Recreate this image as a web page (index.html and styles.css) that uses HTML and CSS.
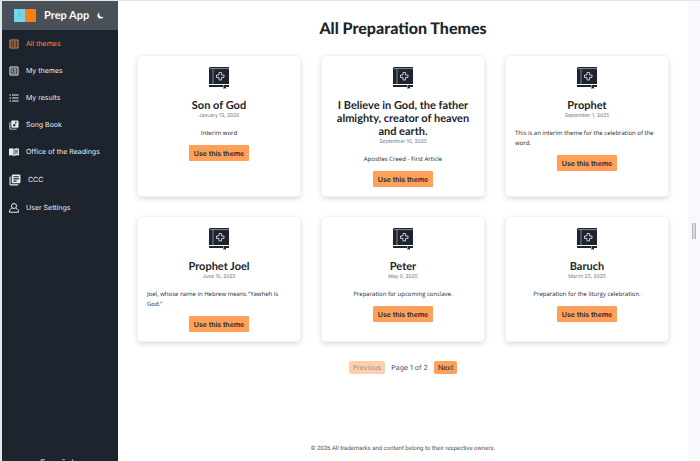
FILE: index.html
```html
<!DOCTYPE html>
<html lang="en">
<head>
    <meta charset="UTF-8">
    <meta name="viewport" content="width=device-width, initial-scale=1.0">
    <title>Prep App</title>
    <link rel="stylesheet" href="styles.css">
</head>
<body>
    <svg class="defs" width="0" height="0" aria-hidden="true">
        <symbol id="book" viewBox="0 0 20 22">
            <path fill="#1d2430" d="M1 0h19v17H0V1z"/>
            <path stroke="#aeb4bc" stroke-width=".7" fill="none" d="M1 1.600h19M4 1.600V17"/>
            <path fill="#1d2430" d="M0 18h14v2H0zM17 18h3v2h-3zM14.500 18H17v4l-1.250-1-1.250 1z"/>
            <path stroke="#d5d8dc" stroke-width=".9" fill="#1d2430" d="M10 5.500h2.500V8H15v2.500h-2.500V13H10v-2.500H7.500V8H10z"/>
        </symbol>
        <symbol id="list-box" viewBox="0 0 20 20">
            <path fill="none" stroke="currentColor" stroke-width="2" d="M2 2h16v16H2z"/>
            <path fill="currentColor" d="M5 5h2.500v2.500H5zM5 9h2.500v2.500H5zM5 13h2.500v2.500H5zM9 5h6v2H9zM9 9h6v2H9zM9 13h6v2H9z"/>
        </symbol>
    </svg>

    <div class="layout">
        <aside class="sidebar">
            <header class="brand">
                <svg class="logo" viewBox="0 0 22 13" aria-hidden="true">
                    <path fill="#71d5ee" d="M0 0h11v13H0z"/>
                    <path fill="#fd7e14" d="M11 0h11v13H11z"/>
                    <path stroke="#b3a477" stroke-width="1" d="M5.500 4v4M4 5h3"/>
                </svg>
                <span class="brand-name">Prep App</span>
                <button class="theme-toggle" type="button" aria-label="Dark mode">
                    <svg viewBox="0 0 16 16"><path fill="#fff" d="M6 1a6.500 6.500 0 0 0 9 9A7.200 7.200 0 1 1 6 1z"/></svg>
                </button>
            </header>
            <nav class="menu">
                <a class="active" href="#">
                    <svg><use href="#list-box"/></svg>
                    All themes
                </a>
                <a href="#">
                    <svg><use href="#list-box"/></svg>
                    My themes
                </a>
                <a href="#">
                    <svg viewBox="0 0 20 20"><path fill="none" stroke="currentColor" stroke-width="2" d="M1 4h3M6 4h13M1 10h3M6 10h13M1 16h3M6 16h13"/></svg>
                    My results
                </a>
                <a href="#">
                    <svg viewBox="1 1 22 22"><path fill="currentColor" d="M20 2H8a2 2 0 0 0-2 2v12c0 1.100.9 2 2 2h12a2 2 0 0 0 2-2V4a2 2 0 0 0-2-2zm-2 5h-3v5.500a2.500 2.500 0 1 1-1-2V5h4zM4 6H2v14c0 1.100.9 2 2 2h14v-2H4z"/></svg>
                    Song Book
                </a>
                <a href="#">
                    <svg viewBox="1 1 22 22"><path fill="currentColor" d="M1 5c3-2 8-2 11 .5C15 3 20 3 23 5v15c-3-1.500-8-1.500-11 1-3-2.500-8-2.500-11-1z"/><path stroke="#1d242d" stroke-width="1.500" fill="none" d="M12 6v13M14 9c2-1 4-1 7-.5M14 12c2-1 4-1 7-.5M14 15c2-1 4-1 7-.5"/></svg>
                    Office of the Readings
                </a>
                <a class="large" href="#">
                    <svg viewBox="1 1 22 22"><path fill="currentColor" d="M4 6H2v14c0 1.100.9 2 2 2h14v-2H4zM20 2H8a2 2 0 0 0-2 2v12c0 1.100.9 2 2 2h12a2 2 0 0 0 2-2V4a2 2 0 0 0-2-2zm-1 9H9V9h10zm-4 4H9v-2h6zm4-8H9V5h10z"/></svg>
                    CCC
                </a>
                <a href="#">
                    <svg viewBox="0 0 20 20"><path fill="none" stroke="currentColor" stroke-width="2" d="M10 1a5 5 0 1 1 0 10 5 5 0 0 1 0-10zM6 10c-3 1.500-5 4-5 8.500h18c0-4.500-2-7-5-8.500"/></svg>
                    User Settings
                </a>
            </nav>
            <div class="language">Español</div>
        </aside>

        <main class="content">
            <h1>All Preparation Themes</h1>
            <section class="cards">
                <article class="card">
                    <svg class="book"><use href="#book"/></svg>
                    <h2>Son of God</h2>
                    <time>January 13, 2026</time>
                    <p>Interim word</p>
                    <button type="button">Use this theme</button>
                </article>
                <article class="card">
                    <svg class="book"><use href="#book"/></svg>
                    <h2>I Believe in God, the father almighty, creator of heaven and earth.</h2>
                    <time>September 16, 2025</time>
                    <p>Apostles Creed - First Article</p>
                    <button type="button">Use this theme</button>
                </article>
                <article class="card">
                    <svg class="book"><use href="#book"/></svg>
                    <h2>Prophet</h2>
                    <time>September 1, 2025</time>
                    <p>This is an interim theme for the celebration of the word.</p>
                    <button type="button">Use this theme</button>
                </article>
                <article class="card">
                    <svg class="book"><use href="#book"/></svg>
                    <h2>Prophet Joel</h2>
                    <time>June 16, 2025</time>
                    <p>Joel, whose name in Hebrew means “Yawheh is God.”</p>
                    <button type="button">Use this theme</button>
                </article>
                <article class="card">
                    <svg class="book"><use href="#book"/></svg>
                    <h2>Peter</h2>
                    <time>May 6, 2025</time>
                    <p>Preparation for upcoming conclave.</p>
                    <button type="button">Use this theme</button>
                </article>
                <article class="card">
                    <svg class="book"><use href="#book"/></svg>
                    <h2>Baruch</h2>
                    <time>March 25, 2025</time>
                    <p>Preparation for the liturgy celebration.</p>
                    <button type="button">Use this theme</button>
                </article>
            </section>
            <div class="pagination">
                <button type="button" disabled>Previous</button>
                <span>Page 1 of 2</span>
                <button type="button">Next</button>
            </div>
            <footer>© 2026 All trademarks and content belong to their respective owners.</footer>
        </main>

        <div class="resizer"><span class="handle"></span></div>
    </div>
</body>
</html>
```
FILE: styles.css
```css
* {
    box-sizing: border-box;
}

body {
    margin: 0;
    font-family: Inter, sans-serif;
    font-size: 7px;
    color: #212529;
    background: #fff;
    text-rendering: geometricPrecision;
}

h1, h2, p {
    margin: 0;
}

button {
    font-family: inherit;
    text-rendering: inherit;
    border: none;
    cursor: pointer;
}

.defs {
    position: absolute;
}

.layout {
    display: flex;
    height: 100vh;
    overflow: hidden;
    border-top: 1px solid #e3e7ea;
    border-left: 2px solid #dfe8ec;
}

/* Sidebar */
.sidebar {
    display: flex;
    flex-direction: column;
    flex: 0 0 116px;
    overflow: hidden;
    background: #1d242d;
    color: #e9ecef;
}

.brand {
    display: flex;
    align-items: center;
    flex-shrink: 0;
    height: 29px;
    padding-left: 12px;
    background: #495057;
}

.logo {
    width: 22px;
    height: 13px;
}

.brand-name {
    margin-left: 8px;
    font-family: Lato, sans-serif;
    font-size: 11px;
    font-weight: 700;
    color: #fff;
}

.theme-toggle {
    display: flex;
    margin-left: 8px;
    padding: 0;
    background: none;
}

.theme-toggle svg {
    width: 7px;
    height: 7px;
}

.menu a {
    display: flex;
    align-items: center;
    gap: 7px;
    height: 27px;
    padding-left: 7px;
    color: inherit;
    text-decoration: none;
    white-space: nowrap;
}

.menu svg {
    width: 10px;
    height: 10px;
}

.menu a.active {
    color: #e8934f;
}

.menu a.large {
    height: 29px;
}

.menu .large svg {
    width: 12px;
    height: 12px;
}

.language {
    flex-shrink: 0;
    margin-top: auto;
    margin-bottom: -10px;
    padding-left: 38px;
    font-size: 9px;
    line-height: 14px;
}

/* Content */
.content {
    display: flex;
    flex-direction: column;
    flex: 1;
    padding: 16px 19px 8px;
}

h1 {
    font-family: Lato, sans-serif;
    font-size: 16px;
    line-height: 24px;
    font-weight: 900;
    text-align: center;
}

.cards {
    display: grid;
    grid-template-columns: repeat(3, 1fr);
    gap: 19px 20px;
    margin-top: 14px;
}

.card {
    display: flex;
    flex-direction: column;
    align-items: center;
    padding: 11px 9px 9px;
    border: 1px solid #f1f2f3;
    border-radius: 5px;
    box-shadow: 0 2px 5px rgba(0, 0, 0, 0.14);
}

.book {
    width: 20px;
    height: 22px;
}

.card h2 {
    margin-top: 10px;
    font-family: Lato, sans-serif;
    font-size: 11px;
    line-height: 13px;
    font-weight: 700;
    text-align: center;
}

.card time {
    font-size: 5px;
    line-height: 9px;
    color: #6c757d;
}

.card p {
    margin: 7px 0;
    font-family: "Open Sans", sans-serif;
    font-size: 6px;
    line-height: 10px;
}

.card button {
    height: 16px;
    padding: 0 5px;
    border-radius: 1px;
    background: #ffa05a;
    color: #212529;
    font-size: 7px;
    font-weight: 600;
}

.pagination {
    display: flex;
    justify-content: center;
    align-items: center;
    gap: 6px;
    margin-top: 19px;
    color: #495057;
}

.pagination button {
    height: 13px;
    padding: 0 4px;
    border-radius: 2px;
    background: #ffa05a;
    color: #212529;
    font-size: 7px;
}

.pagination button:disabled {
    opacity: 0.5;
    cursor: default;
}

footer {
    margin-top: auto;
    font-family: Roboto, sans-serif;
    font-size: 6px;
    line-height: 9px;
    text-align: center;
    color: #495057;
}

/* Drag strip on the right edge */
.resizer {
    display: flex;
    align-items: center;
    justify-content: center;
    flex: 0 0 12px;
    background: #f8f9fd;
}

.handle {
    width: 4px;
    height: 16px;
    border: solid #b4b6ba;
    border-width: 0 1px;
    background: #d8dade;
}
```
